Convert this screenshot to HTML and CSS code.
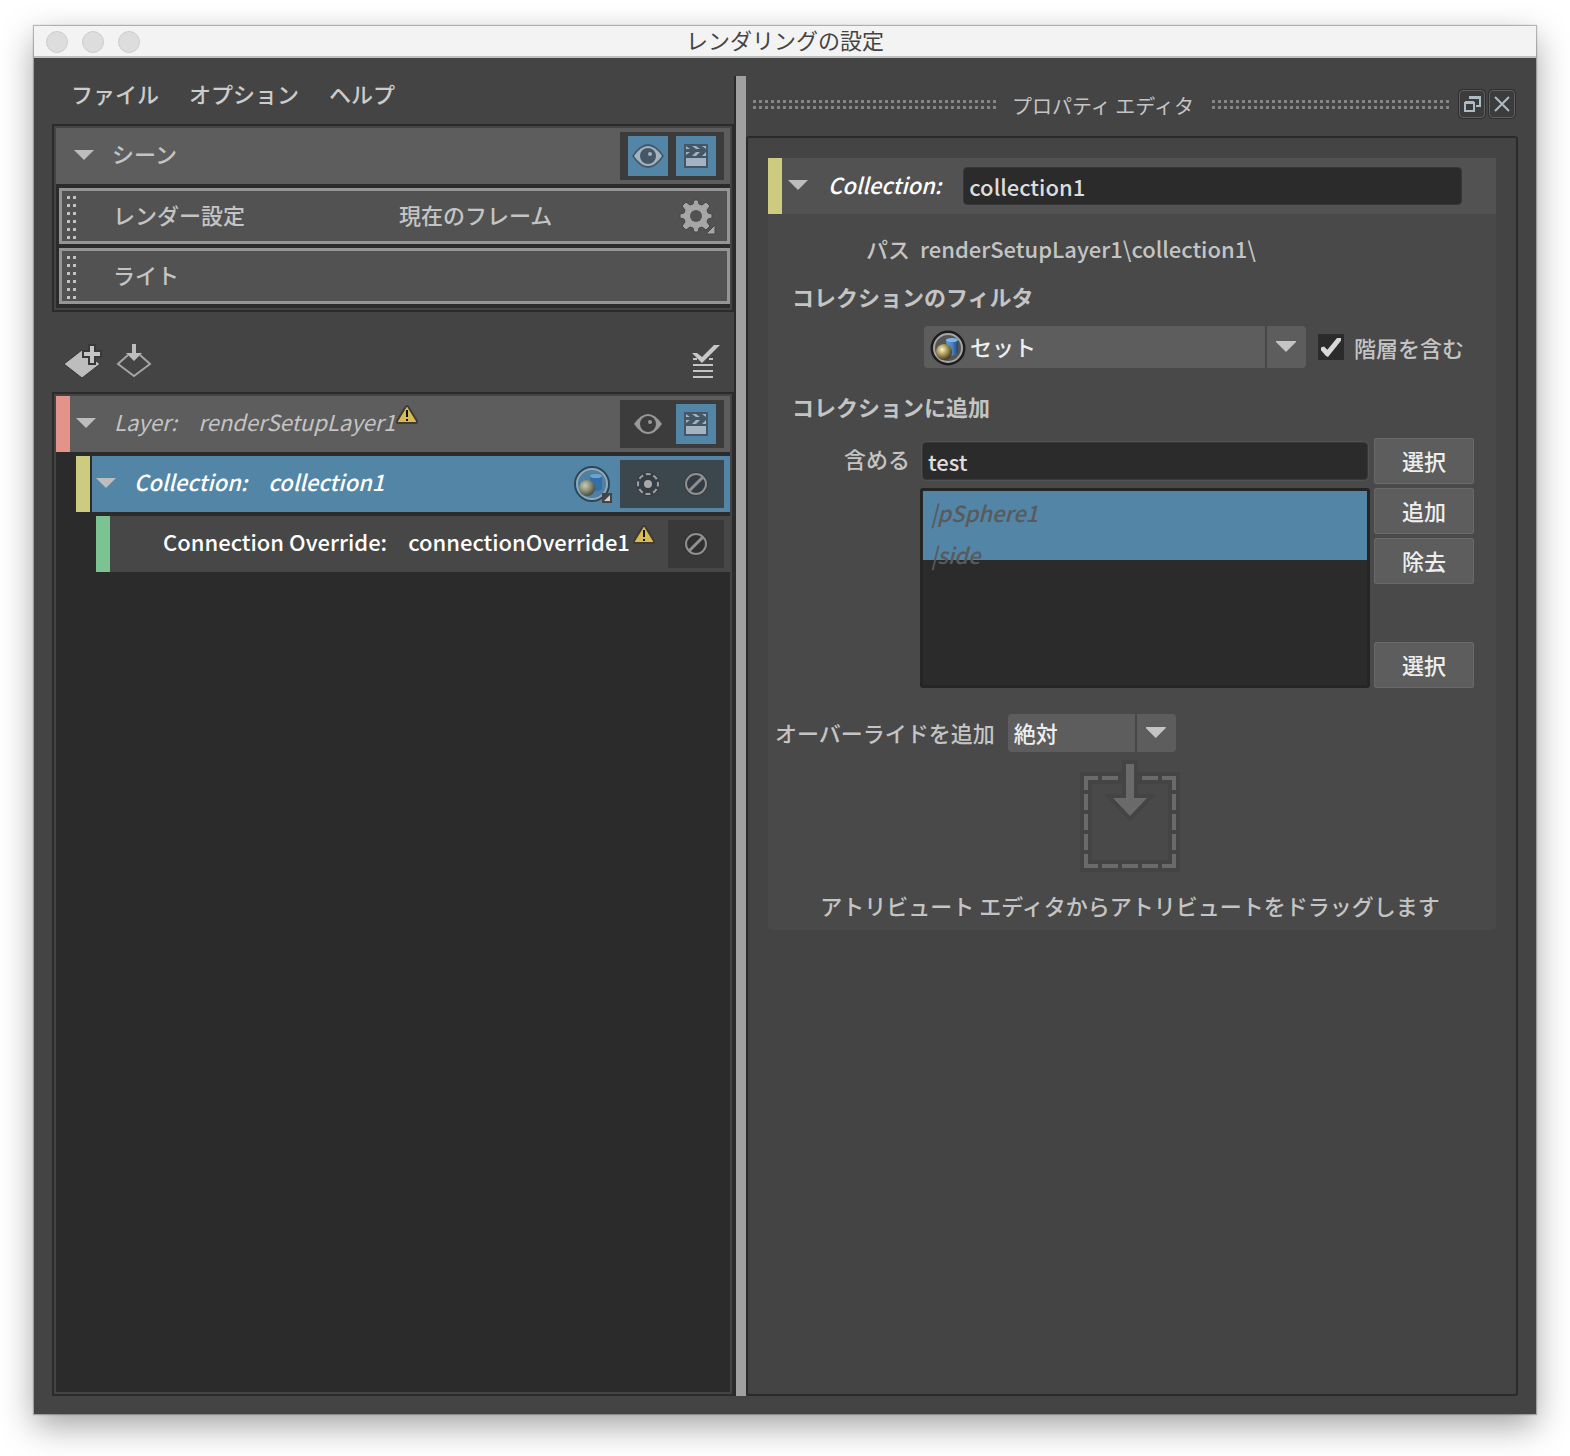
FILE: index.html
```html
<!DOCTYPE html>
<html lang="ja">
<head>
<meta charset="utf-8">
<meta name="viewport" content="width=device-width, initial-scale=1">
<title>レンダリングの設定</title>
<link rel="stylesheet" href="styles.css">
</head>
<body>
<svg class="defs" aria-hidden="true">
  <defs>
    <radialGradient id="ball" cx="0.38" cy="0.35" r="0.7">
      <stop offset="0" stop-color="#fff6c4"/><stop offset="0.4" stop-color="#b5a468"/><stop offset="1" stop-color="#3a3114"/>
    </radialGradient>
    <radialGradient id="ball-dim" cx="0.38" cy="0.35" r="0.7">
      <stop offset="0" stop-color="#c9cdb0"/><stop offset="0.5" stop-color="#8a8f78"/><stop offset="1" stop-color="#3c4640"/>
    </radialGradient>
    <linearGradient id="tube" x1="0" x2="1" y1="0" y2="0">
      <stop offset="0" stop-color="#5f9bd6"/><stop offset="0.5" stop-color="#4b86c4"/><stop offset="1" stop-color="#1e4675"/>
    </linearGradient>
  </defs>
  <symbol id="eye-on" viewBox="0 0 40 40">
    <path d="M4 20Q12 8 20 8Q28 8 36 20Q28 32 20 32Q12 32 4 20Z" fill="#435766"/>
    <path d="M6 20Q13 10 20 10Q27 10 34 20Q27 30 20 30Q13 30 6 20Z" fill="#a3b3c0"/>
    <circle cx="20" cy="20" r="8" fill="#435766"/><circle cx="22" cy="18" r="2" fill="#a3b3c0"/>
  </symbol>
  <symbol id="eye-off" viewBox="0 0 40 40">
    <path d="M6 20Q13 10 20 10Q27 10 34 20Q27 30 20 30Q13 30 6 20Z" fill="#999"/>
    <circle cx="20" cy="20" r="8" fill="#3c3c3c"/><circle cx="22" cy="18" r="2" fill="#999"/>
  </symbol>
  <symbol id="clap" viewBox="0 0 40 40">
    <path d="M8 8H32V32H8Z" fill="#435766"/>
    <path d="M10 22H30V30H10ZM10 10L14 13H10ZM16 10H20L24 13H20ZM26 10H30V13ZM10 16H14L10 19ZM20 16H24L20 20H16ZM30 16V20H26Z" fill="#a3b3c0"/>
  </symbol>
  <symbol id="ban" viewBox="0 0 40 40">
    <circle cx="20" cy="20" r="12" fill="#000" opacity="0.14"/>
    <g fill="none" stroke="#8f8f8f"><circle cx="20" cy="20" r="10" stroke-width="2"/><path d="M13 27L27 13" stroke-width="3"/></g>
  </symbol>
  <symbol id="isolate" viewBox="0 0 40 40">
    <circle cx="20" cy="20" r="12" fill="#000" opacity="0.1"/>
    <circle cx="20" cy="20" r="10" fill="none" stroke="#a0a0a0" stroke-width="2" stroke-dasharray="5 2.85" stroke-dashoffset="2.5"/>
    <circle cx="20" cy="20" r="4" fill="#a8a8a8"/>
  </symbol>
  <symbol id="warn" viewBox="0 0 24 20">
    <path d="M12 1Q13 1 14 3L22 16Q22 18 21 18H3Q2 18 2 16L10 3Q11 1 12 1Z" fill="#d9bb56" stroke="#3f3b30" stroke-width="2" stroke-linejoin="round"/>
    <path d="M11 5H13V12H11ZM11 14H13V16H11Z" fill="#111"/>
  </symbol>
</svg>

<div class="window">
  <header class="titlebar">
    <div class="lights"><button type="button" aria-label="閉じる"></button><button type="button" aria-label="最小化"></button><button type="button" aria-label="拡大"></button></div>
    <h1>レンダリングの設定</h1>
  </header>

  <main class="content">
    <section class="setup">
      <nav class="menu"><a href="#file">ファイル</a><a href="#options">オプション</a><a href="#help">ヘルプ</a></nav>

      <div class="frame">
        <div class="row row-head">
          <button type="button" class="fold" aria-label="シーンを折りたたむ"></button>
          <span class="name">シーン</span>
          <div class="toggles">
            <button type="button" class="toggle on" aria-label="表示"><svg><use href="#eye-on"/></svg></button>
            <button type="button" class="toggle on" aria-label="レンダー可能"><svg><use href="#clap"/></svg></button>
          </div>
        </div>
        <div class="row row-item">
          <span class="grip"></span>
          <span class="item-name">レンダー設定</span><span class="item-value">現在のフレーム</span>
          <button type="button" class="gear" aria-label="設定">
            <svg viewBox="0 0 40 40">
              <g fill="#a6a6a6" stroke="#444" stroke-width="1">
                <path d="M17 4H21L22 8L25 9L29 6L33 10L30 14L31 17L35 18V22L31 23L30 26L33 30L29 34L25 31L22 32L21 36H17L16 32L13 31L9 34L5 30L8 26L7 23L3 22V18L7 17L8 14L5 10L9 6L13 9L16 8Z"/>
                <path d="M38 29V38H29Z"/>
              </g>
              <circle cx="19" cy="20" r="6" fill="#525252"/>
            </svg>
          </button>
        </div>
        <div class="row row-item"><span class="grip"></span><span class="item-name">ライト</span></div>
      </div>

      <div class="toolbar">
        <button type="button" class="tool" aria-label="レイヤを作成">
          <svg viewBox="0 0 40 40"><path d="M2 22L20 8L38 22L20 36Z" fill="#bdbdbd" stroke="#383838"/><path d="M28 4H32V10H38V14H32V21H28V14H22V10H28Z" fill="#c8c8c8" stroke="#383838" stroke-width="4"/><path d="M28 4H32V10H38V14H32V21H28V14H22V10H28Z" fill="#c4c4c4"/></svg>
        </button>
        <button type="button" class="tool" aria-label="読み込み">
          <svg viewBox="0 0 40 40"><path d="M14 13L4 22L20 34L36 22L26 13" fill="none" stroke="#a4a4a4" stroke-width="2"/><path d="M18 2H22V11H28L20 19L12 11H18Z" fill="#bdbdbd"/></svg>
        </button>
        <button type="button" class="tool tool-end" aria-label="すべて確認">
          <svg viewBox="0 0 40 40"><path d="M9 17H13M25 17H29M9 23H29M9 29H29M9 35H29" stroke="#c4c4c4" stroke-width="2"/><path d="M8 11H13L18 15L30 3H36L18 21Z" fill="#c8c8c8"/></svg>
        </button>
      </div>

      <div class="frame tree">
        <div class="row row-head layer">
          <span class="strip pink"></span>
          <button type="button" class="fold" aria-label="レイヤを折りたたむ"></button>
          <em class="name">Layer:</em><em class="value">renderSetupLayer1</em>
          <svg class="warn"><use href="#warn"/></svg>
          <div class="toggles">
            <button type="button" class="toggle" aria-label="表示"><svg><use href="#eye-off"/></svg></button>
            <button type="button" class="toggle on" aria-label="レンダー可能"><svg><use href="#clap"/></svg></button>
          </div>
        </div>
        <div class="row row-head level-1 selected">
          <span class="strip yellow"></span>
          <button type="button" class="fold" aria-label="コレクションを折りたたむ"></button>
          <em class="name">Collection:</em><em class="value">collection1</em>
          <button type="button" class="filter" aria-label="フィルタ">
            <svg viewBox="0 0 40 40">
              <circle cx="19" cy="20" r="17" fill="#4f80a1" stroke="#2d4556" stroke-width="2"/><circle cx="19" cy="20" r="15" fill="none" stroke="#8fa7b6" stroke-width="2"/>
              <path d="M17 12L29 11V25Q24 29 18 26Z" fill="#356ea6"/><ellipse cx="23" cy="12" rx="6" ry="2" fill="#6da3cf"/><circle cx="14" cy="24" r="8" fill="url(#ball-dim)"/>
              <path d="M29 29H39V39H29Z" fill="#444"/><path d="M37 31V37H31Z" fill="#d0d0d0"/>
            </svg>
          </button>
          <div class="toggles">
            <button type="button" class="toggle" aria-label="選択項目を分離"><svg><use href="#isolate"/></svg></button>
            <button type="button" class="toggle" aria-label="無効化"><svg><use href="#ban"/></svg></button>
          </div>
        </div>
        <div class="row row-head level-2">
          <span class="strip green"></span>
          <span class="name">Connection Override:</span><span class="value">connectionOverride1</span>
          <svg class="warn"><use href="#warn"/></svg>
          <div class="toggles">
            <button type="button" class="toggle" aria-label="無効化"><svg><use href="#ban"/></svg></button>
          </div>
        </div>
      </div>
    </section>

    <div class="splitter" role="separator"></div>

    <section class="editor">
      <header class="dock">
        <span class="dots"></span>
        <h2>プロパティ エディタ</h2>
        <span class="dots"></span>
        <button type="button" class="dock-button" aria-label="切り離す"><svg viewBox="0 0 24 24"><g fill="none" stroke="#abbcc4" stroke-width="2"><path d="M5 11H14V19H5Z"/><path d="M9 5H20V14H16"/><path d="M5 10H14M9 6H20"/></g></svg></button>
        <button type="button" class="dock-button" aria-label="閉じる"><svg viewBox="0 0 24 24"><path d="M5 5L19 19M19 5L5 19" stroke="#abbcc4" stroke-width="2"/></svg></button>
      </header>

      <div class="well">
        <form class="panel">
          <div class="panel-head">
            <span class="strip yellow"></span>
            <button type="button" class="fold" aria-label="折りたたむ"></button>
            <label for="name"><em>Collection:</em></label>
            <input id="name" class="text" type="text" value="collection1">
          </div>

          <div class="line path"><span class="label">パス</span><span>renderSetupLayer1\collection1\</span></div>
          <h3>コレクションのフィルタ</h3>
          <div class="line filter-line">
            <div class="combo combo-set">
              <svg class="combo-icon" viewBox="0 0 38 38">
                <circle cx="19" cy="19" r="16" fill="#555" stroke="#1d1d1d" stroke-width="3"/><circle cx="19" cy="19" r="14" fill="none" stroke="#a5a5a5" stroke-width="2"/>
                <path d="M17 11L29 10V24Q25 28 19 26Z" fill="url(#tube)"/><ellipse cx="23" cy="11" rx="6" ry="2" fill="#82b4e2"/><circle cx="15" cy="23" r="8" fill="url(#ball)"/>
              </svg>
              <select aria-label="コレクションのフィルタ"><option>セット</option></select>
            </div>
            <label class="check"><input type="checkbox" checked>階層を含む</label>
          </div>

          <h3 class="second">コレクションに追加</h3>
          <div class="members">
            <label class="label" for="include">含める</label>
            <input id="include" class="text" type="text" value="test">
            <button type="button" class="push">選択</button>
            <ul class="list"><li>|pSphere1</li><li>|side</li></ul>
            <div class="stack">
              <button type="button" class="push">追加</button>
              <button type="button" class="push">除去</button>
              <button type="button" class="push">選択</button>
            </div>
          </div>

          <div class="line override">
            <label for="override">オーバーライドを追加</label>
            <div class="combo combo-small"><select id="override"><option>絶対</option></select></div>
          </div>
          <div class="drop">
            <svg viewBox="0 0 100 112">
              <path d="M0 12H100V112H0Z" fill="#444"/>
              <path d="M12 24H88V100H12Z" fill="#494949"/>
              <path d="M42 0H58V34H76L50 62L24 34H42Z" fill="#444"/>
              <path d="M4 30V16H18V20H8V30ZM22 16H38V20H22ZM62 16H78V20H62ZM82 16H96V30H92V20H82ZM4 34H8V50H4ZM4 54H8V70H4ZM4 74H8V90H4ZM92 34H96V50H92ZM92 54H96V70H92ZM92 74H96V90H92ZM4 94H8V104H18V108H4ZM22 104H38V108H22ZM42 104H58V108H42ZM62 104H78V108H62ZM82 104H92V94H96V108H82Z" fill="#6a6a6a"/>
              <path d="M46 4H54V38H67L50 56L33 38H46Z" fill="#6a6a6a"/>
            </svg>
            <p>アトリビュート エディタからアトリビュートをドラッグします</p>
          </div>
        </form>
      </div>
    </section>
  </main>
</div>
</body>
</html>
```
FILE: styles.css
```css
* { box-sizing: border-box; }

body {
  margin: 0;
  background: #fff;
  color: #c4c4c4;
  font: 500 22px/36px "Noto Sans CJK JP", sans-serif;
}

h1, h2, h3, p, ul { margin: 0; padding: 0; }
button, input, select { font: inherit; color: inherit; margin: 0; border: 0; border-radius: 0; padding: 0; }
button { background: none; }
svg { display: block; }
.defs { position: absolute; width: 0; height: 0; }

.window {
  display: flex;
  flex-direction: column;
  min-height: calc(100vh - 68px);
  margin: 26px 34px 42px;
  background: #444;
  box-shadow: 0 0 1px 1px rgba(0, 0, 0, 0.25), 0 12px 32px rgba(0, 0, 0, 0.36);
}

.titlebar {
  display: grid;
  grid-template-columns: 1fr auto 1fr;
  align-items: start;
  height: 32px;
  border-bottom: 2px solid #bcbfbe;
  background: #f3f3f3;
}
.titlebar h1 { color: #444; font-size: 22px; font-weight: 400; line-height: 26px; }
.lights { display: flex; gap: 14px; padding: 5px 0 0 12px; }
.lights button { width: 22px; height: 22px; border: 1px solid #cdcdcd; border-radius: 50%; background: #ddd; }

.content { flex: 1; display: grid; grid-template-columns: minmax(0, 684fr) 10px minmax(0, 772fr); padding: 18px; }
.setup { display: flex; flex-direction: column; border-right: 2px solid #2b2b2b; }
.splitter { background: #a0a0a0; }
.editor { display: flex; flex-direction: column; }

.menu { display: flex; gap: 30px; height: 48px; padding-left: 19px; line-height: 34px; }
.menu a { color: #ccc; text-decoration: none; }

.frame {
  display: flex;
  flex-direction: column;
  gap: 4px;
  padding: 2px 2px 6px;
  border: 2px solid #2b2b2b;
  outline: 2px solid #444;
  outline-offset: -4px;
  background: #2b2b2b;
}
.tree { flex: 1; }
.row { position: relative; z-index: 1; display: flex; height: 56px; }
.row-head { background: #5d5d5d; }
.strip { flex: none; width: 14px; }
.pink { background: #e39389; }
.yellow { background: #cccb80; }
.green { background: #7bc391; }

.fold { flex: none; width: 20px; height: 10px; margin: 22px 18px 0; background: #bdbdbd; clip-path: polygon(0 0, 100% 0, 50% 100%); }
.strip + .fold { margin-left: 6px; }
.name, .value { line-height: 50px; white-space: nowrap; }
.value { margin-left: 21px; }
.warn { flex: none; width: 24px; height: 20px; margin-top: 9px; }

.toggles { display: flex; gap: 8px; height: 48px; margin: 4px 6px 4px auto; padding: 4px 8px; background: #3c3c3c; }
.toggle { width: 40px; height: 40px; }
.toggle svg { width: 40px; height: 40px; }
.on { background: #5285a6; }

.row-item { border: 3px solid #959595; background: #525252; margin-left: 3px; line-height: 46px; }
.grip {
  width: 10px;
  height: 44px;
  margin: 5px 0 0 5px;
  background: repeating-linear-gradient(transparent 0 3px, #525252 3px 8px), repeating-linear-gradient(90deg, #c4c4c4 0 3px, #525252 3px 6px);
}
.item-name { width: 286px; margin-left: 36px; }
.gear { width: 40px; height: 40px; margin: 5px 10px 0 auto; }

.toolbar { display: flex; gap: 12px; height: 80px; padding: 30px 10px 0; }
.tool { width: 40px; height: 40px; }
.tool-end { margin-left: auto; }

.layer { font-weight: 400; }
.level-1 { margin-left: 20px; }
.level-2 { margin-left: 40px; background: #474747; color: #fff; }
.level-2 .name { margin-left: 53px; }
.level-2 .value { margin-right: 2px; }
.level-2 .toggles { background: #393939; }
.selected { background: #5285a6; color: #fff; }
.selected .strip { width: 16px; border-right: 2px solid #2b2b2b; }
.selected .fold { margin-left: 4px; }
.selected .toggles { margin-left: 7px; background: #3c464d; }
.filter { width: 40px; height: 40px; margin: 8px 0 0 auto; }

.dock { display: flex; height: 60px; padding: 14px 3px 0 7px; }
.dock h2 { margin: -2px 18px 0 16px; font-size: 20px; font-weight: 400; line-height: 36px; white-space: nowrap; }
.dots {
  flex: 1;
  height: 9px;
  margin-top: 10px;
  background: repeating-linear-gradient(transparent 0 3px, #444 3px 6px), repeating-linear-gradient(90deg, #858585 0 3px, #444 3px 6px);
}
.dots:first-child { flex: 0 0 243px; }
.dock-button { flex: none; width: 26px; height: 28px; margin-left: 4px; padding: 0; border: 1px solid #606060; border-radius: 4px; background: #3c3c3c; box-shadow: 0 0 0 1px #2f2f2f; }
.dots + .dock-button { margin-left: 10px; }

.well { flex: 1; padding: 20px; border: 2px solid #2a2a2a; border-radius: 3px; }
.panel { border-radius: 4px; background: #494949; padding-bottom: 7px; }
.panel-head { display: flex; height: 56px; background: #525252; }
.panel-head label { margin: 0 22px 0 2px; color: #fff; line-height: 52px; }
.text { min-width: 0; width: 100%; height: 38px; padding: 0 5px; border: 1px solid #383838; border-radius: 4px; background: #2b2b2b; color: #ddd; outline: 1px solid #525252; }
.panel-head .text { flex: 1; margin: 9px 34px 0 0; }

.line { display: flex; }
.label { width: 142px; text-align: right; }
.path { gap: 10px; padding-top: 16px; }
h3 { padding: 12px 24px; font-size: 22px; font-weight: 700; line-height: 36px; }
.second { padding: 20px 24px 14px; }
.filter-line { padding: 0 32px 0 156px; }

.combo { position: relative; display: flex; color: #eee; }
.combo select { appearance: none; width: 100%; height: 100%; padding: 0 46px 2px 6px; border-radius: 4px; background: #5d5d5d; }
.combo::before { content: ""; position: absolute; right: 39px; top: 0; width: 2px; height: 100%; background: #474747; }
.combo::after { content: ""; position: absolute; right: 10px; top: 50%; width: 20px; height: 11px; margin-top: -6px; background: #c4c4c4; clip-path: polygon(0 0, 100% 0, 100% 10%, 50% 100%, 0 10%); pointer-events: none; }
.combo-set { flex: 1; height: 42px; }
.combo-set select { padding-left: 46px; }
.combo-icon { position: absolute; left: 5px; top: 3px; width: 38px; height: 38px; }
.combo-small { width: 168px; height: 38px; }

.check { display: flex; align-items: center; margin-left: 12px; white-space: nowrap; }
.check input { appearance: none; width: 26px; height: 26px; margin-right: 10px; background: #2b2b2b; }
.check input:checked::before { content: ""; display: block; width: 20px; height: 19px; margin: 4px 0 0 3px; background: #d8d8d8; clip-path: polygon(0 50%, 15% 45%, 32% 62%, 80% 0, 100% 0, 100% 15%, 35% 100%, 25% 95%, 0 65%); }

.members { display: grid; grid-template-columns: 142px 1fr 100px; gap: 4px; padding-right: 22px; }
.members .label { line-height: 40px; }
.members .text { width: auto; margin: 4px 2px 0 8px; }
.push { width: 100px; height: 46px; padding-bottom: 2px; border: 1px solid #696969; border-radius: 2px; background: #5d5d5d; color: #eee; line-height: 40px; }
.list {
  grid-column: 2;
  height: 200px;
  margin-left: 6px;
  padding: 0 8px;
  border: 3px solid #252525;
  border-radius: 3px;
  background: linear-gradient(#5285a6 0 69px, #2b2b2b 69px);
  color: #5a5a5a;
  font-style: italic;
  line-height: 42px;
  list-style: none;
}
.stack { display: flex; flex-direction: column; gap: 4px; }
.stack .push:last-child { margin-top: auto; }

.override { gap: 13px; padding: 26px 0 0 7px; }
.drop { display: flex; flex-direction: column; align-items: center; padding: 8px 4px 0 0; }
.drop svg { width: 100px; height: 112px; }
.drop p { margin-top: 15px; }
```
